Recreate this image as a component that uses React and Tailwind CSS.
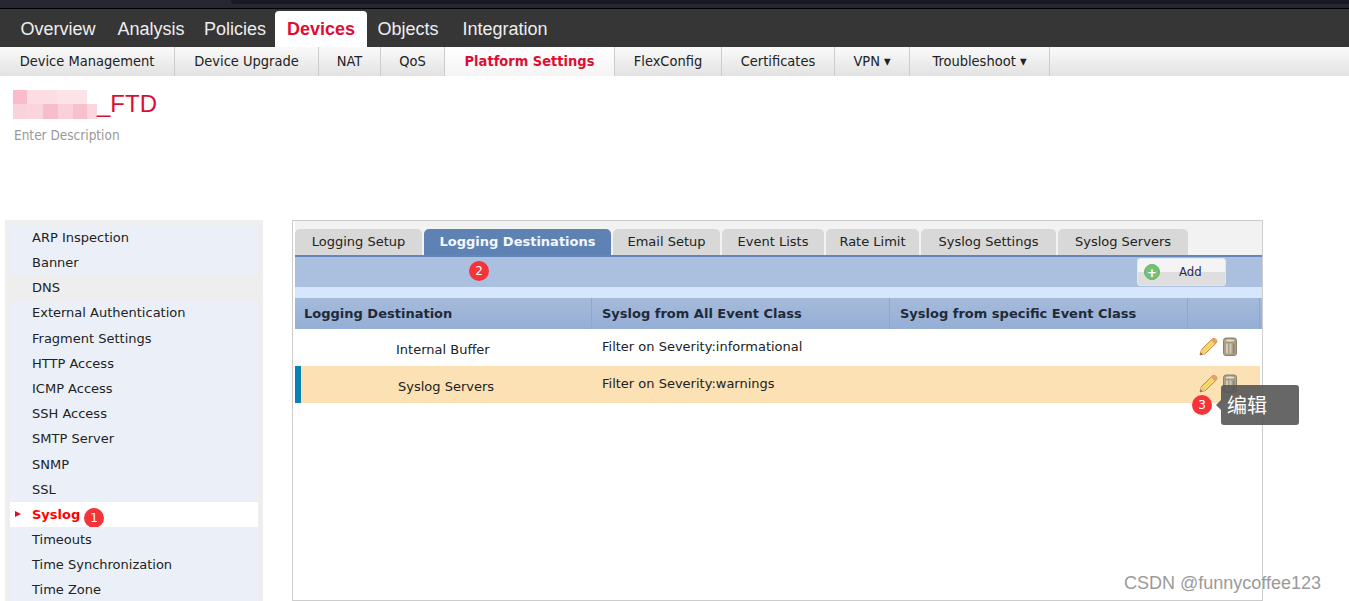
import { Fragment } from "react";

const NAV = [
  { label: "Overview", w: "w-[98px]" },
  { label: "Analysis", w: "w-[88px]" },
  { label: "Policies", w: "w-[80px]" },
  { label: "Devices", w: "w-[92px]", active: true },
  { label: "Objects", w: "w-[82px]" },
  { label: "Integration", w: "w-[112px]" },
];

const SUBNAV = [
  { label: "Device Management", w: "w-[175px]" },
  { label: "Device Upgrade", w: "w-[144px]" },
  { label: "NAT", w: "w-[62px]" },
  { label: "QoS", w: "w-[64px]" },
  { label: "Platform Settings", w: "w-[170px]", active: true },
  { label: "FlexConfig", w: "w-[107px]" },
  { label: "Certificates", w: "w-[113px]" },
  { label: "VPN ▾", w: "w-[75px]" },
  { label: "Troubleshoot ▾", w: "w-[140px]" },
];

const SIDEBAR = [
  "ARP Inspection",
  "Banner",
  "DNS",
  "External Authentication",
  "Fragment Settings",
  "HTTP Access",
  "ICMP Access",
  "SSH Access",
  "SMTP Server",
  "SNMP",
  "SSL",
  "Syslog",
  "Timeouts",
  "Time Synchronization",
  "Time Zone",
];

const TABS = [
  { label: "Logging Setup", w: "w-[127px]" },
  { label: "Logging Destinations", w: "w-[187px]", active: true },
  { label: "Email Setup", w: "w-[107px]" },
  { label: "Event Lists", w: "w-[102px]" },
  { label: "Rate Limit", w: "w-[93px]" },
  { label: "Syslog Settings", w: "w-[135px]" },
  { label: "Syslog Servers", w: "w-[130px]" },
];

const MOSAIC = [
  [0, 0, 14, 14, "#f9bccb"], [14, 0, 30, 14, "#fbdde3"], [44, 0, 30, 14, "#fce3e8"],
  [0, 14, 14, 15, "#fad2db"], [14, 14, 16, 15, "#fbd5dd"], [30, 14, 15, 15, "#f8bdca"],
  [45, 14, 15, 15, "#fad0da"], [60, 14, 14, 15, "#f8c0cc"], [74, 14, 10, 15, "#fbd6de"],
];

function Badge({ n, className }) {
  return (
    <span className={`absolute flex h-5 w-5 items-center justify-center rounded-full bg-[#f53339] text-[12px] text-white ${className}`}>
      {n}
    </span>
  );
}

function Pencil() {
  return (
    <svg width="19" height="19" viewBox="0 0 19 19">
      <path d="M1 18 L2.5 12.5 L13.5 1.8 Q15 .8 16.6 2 L17.6 3.2 Q18.4 4.6 17.2 6 L6.4 16.6 Z" fill="#f3cf5a" stroke="#c98a35" strokeWidth="1" />
      <path d="M4 13.5 L14.8 3 M6 15 L16.4 5" stroke="#fbeaa0" strokeWidth="1" />
      <path d="M13.5 1.8 Q15 .8 16.6 2 L17.6 3.2 Q18.4 4.6 17.2 6 L15.8 7.2 L12.2 3.2 Z" fill="#e9a070" />
      <path d="M1 18 L2.5 12.5 L6.4 16.6 Z" fill="#e8c79a" />
      <path d="M1 18 L1.7 15.4 L3.6 17.2 Z" fill="#8a5a2a" />
    </svg>
  );
}

function Trash() {
  return (
    <svg width="14" height="19" viewBox="0 0 14 19">
      <rect x="0.5" y="1" width="13" height="17.5" rx="2.5" fill="#a99f86" stroke="#8b826c" />
      <ellipse cx="7" cy="3.5" rx="5" ry="1.6" fill="#e3dfd2" stroke="#8b826c" strokeWidth=".6" />
      <rect x="3" y="6.5" width="2" height="10" fill="#d2ccb9" />
      <rect x="6.5" y="6.5" width="2" height="10" fill="#cfc9b5" />
      <rect x="10" y="6.5" width="1.5" height="10" fill="#8f866f" />
    </svg>
  );
}

function RowIcons() {
  return (
    <div className="flex w-[72px] items-start gap-[5px] pl-[11px] pt-[8px]">
      <Pencil />
      <Trash />
    </div>
  );
}

export default function App() {
  return (
    <div className="relative h-[601px] w-[1349px] overflow-hidden bg-white font-['DejaVu_Sans',sans-serif] text-[13px] text-[#222]">
      {/* browser chrome strip */}
      <div className="flex h-[8px] bg-[#272733]">
        <div className="h-[4px] flex-1 ml-[231px] rounded-bl-[4px] bg-[#191922]" />
      </div>

      {/* main nav */}
      <div className="flex h-[39px] border-t border-black bg-[#363636] pl-[9px] pt-[2px] font-['Liberation_Sans',sans-serif] text-[18px]">
        {NAV.map((item) => (
          <div
            key={item.label}
            className={`flex h-[36px] items-center justify-center rounded-t-[4px] ${item.w} ${
              item.active ? "bg-white font-bold text-[#de0d35]" : "text-[#eeeeee]"
            }`}
          >
            {item.label}
          </div>
        ))}
      </div>

      {/* sub nav */}
      <div className="flex h-[29px] bg-gradient-to-b from-[#fafafa] to-[#e2e2e2] font-['DejaVu_Sans_Condensed','DejaVu_Sans',sans-serif] text-[14.5px]">
        {SUBNAV.map((item) => (
          <div
            key={item.label}
            className={`flex h-full items-center justify-center border-r border-[#cccccc] ${item.w} ${
              item.active ? "bg-gradient-to-b from-white to-[#f4f4f4] font-bold text-[#de0d35]" : "text-[#222]"
            }`}
          >
            {item.label}
          </div>
        ))}
      </div>

      {/* title */}
      <div className="h-[144px] pl-[14px] pt-[13px]">
        <div className="flex h-[30px] items-center">
          <svg width="84" height="30" viewBox="0 0 84 30" className="-ml-[1px] mr-[12px] mt-[1px] shrink-0">
            {MOSAIC.map(([x, y, w, h, fill]) => (
              <rect key={`${x}-${y}`} x={x} y={y} width={w} height={h} fill={fill} />
            ))}
          </svg>
          <span className="-ml-[12px] font-['Liberation_Sans',sans-serif] text-[24px] leading-[30px] text-[#de0d35]">_FTD</span>
        </div>
        <div className="mt-[6px] font-['DejaVu_Sans_Condensed','DejaVu_Sans',sans-serif] text-[13.5px] text-[#999999]">Enter Description</div>
      </div>

      <div className="flex items-start pl-[5px]">
        {/* sidebar */}
        <div className="h-[381px] w-[258px] bg-[#eeeeee] px-[5px] pt-[5px]">
          {SIDEBAR.map((name) => (
            <div
              key={name}
              className={`relative flex h-[25.2px] items-center pl-[22px] ${
                name === "Syslog"
                  ? "bg-white font-bold text-[#ff0000]"
                  : name === "DNS"
                    ? "bg-[#eeeeee]"
                    : "bg-[#ebf0f8]"
              }`}
            >
              {name === "Syslog" && (
                <Fragment>
                  <span className="absolute left-[5px] top-[9px] h-0 w-0 border-y-[3.5px] border-l-[6px] border-y-transparent border-l-[#d8112a]" />
                  <Badge n="1" className="left-[74px] top-[6px] font-normal" />
                </Fragment>
              )}
              {name}
            </div>
          ))}
        </div>

        {/* panel */}
        <div className="relative ml-[29px] h-[381px] w-[971px] border border-[#cccccc] pl-[2px]">
          <div className="h-full border-l-[0px] border-[#c9d3e0]">
            <div className="flex h-[34px] items-end gap-[2px] bg-[#f2f2f2] pr-[2px]">
              {TABS.map((tab) => (
                <div
                  key={tab.label}
                  className={`flex h-[26px] shrink-0 items-center justify-center rounded-t-[5px] ${tab.w} ${
                    tab.active ? "bg-[#5f82b5] font-bold text-[#f4f7fb]" : "bg-[#d8d8d8] text-[#222]"
                  }`}
                >
                  {tab.label}
                </div>
              ))}
            </div>
            <div className="h-[2px] bg-[#6386b8]" />

            {/* toolbar */}
            <div className="relative flex h-[30px] items-start justify-end bg-[#abc0df] pr-[36px] pt-[1px]">
              <Badge n="2" className="left-[174px] top-[4px]" />
              <div className="flex h-[28px] w-[89px] items-center rounded-[3px] border border-[#e2e8f1] bg-gradient-to-b from-[#f4f4f4] from-50% to-[#dedede] to-50% pl-[6px] font-['DejaVu_Sans_Condensed','DejaVu_Sans',sans-serif] text-[#2a2a55]">
                <span className="flex h-[16px] w-[16px] items-center justify-center rounded-full border border-[#6fae6f] bg-[#74c174] text-[13px] font-bold leading-none text-white">+</span>
                <span className="ml-[19px]">Add</span>
              </div>
            </div>
            <div className="h-[11px] bg-[#d6e6fd]" />

            {/* table */}
            <div className="flex h-[31px] items-center bg-gradient-to-b from-[#a6bbdb] to-[#95aed5] font-bold text-[#1f2a38]">
              <div className="flex h-full w-[297px] items-center border-r border-[#8fa7cc] pl-[9px]">Logging Destination</div>
              <div className="flex h-full w-[298px] items-center border-r border-[#8fa7cc] pl-[10px]">Syslog from All Event Class</div>
              <div className="flex h-full w-[298px] items-center border-r border-[#8fa7cc] pl-[10px]">Syslog from specific Event Class</div>
              <div className="h-full w-[72px] border-r border-[#8fa7cc]" />
            </div>
            <div className="flex h-[37px]">
              <div className="w-[297px] pl-[101px] pt-[11px]">Internal Buffer</div>
              <div className="w-[298px] pl-[10px] pt-[8px]">Filter on Severity:informational</div>
              <div className="w-[298px]" />
              <RowIcons />
            </div>
            <div className="flex h-[37px] w-[965px] border-l-[6px] border-[#0a82b4] bg-[#fce1b4]">
              <div className="w-[291px] pl-[97px] pt-[11px]">Syslog Servers</div>
              <div className="w-[298px] pl-[10px] pt-[8px]">Filter on Severity:warnings</div>
              <div className="w-[298px]" />
              <RowIcons />
            </div>
          </div>
        </div>
      </div>

      {/* step 3 badge and tooltip */}
      <Badge n="3" className="left-[1192px] top-[395px]" />
      <div className="absolute left-[1221px] top-[385px] flex h-[40px] w-[78px] items-center rounded-[3px] bg-[#565656]/90 pl-[6px] font-['Noto_Sans_CJK_SC',sans-serif] text-[20px] text-white">
        <span className="absolute -left-[5px] top-[15px] h-0 w-0 border-y-[5px] border-r-[5px] border-y-transparent border-r-[#565656]/90" />
        编辑
      </div>

      {/* watermark */}
      <div className="absolute left-[1124px] top-[570px] font-['Liberation_Sans',sans-serif] text-[18px] text-[#9a9a9a] [text-shadow:0_0_2px_#ffffff]">
        CSDN @funnycoffee123
      </div>
    </div>
  );
}
